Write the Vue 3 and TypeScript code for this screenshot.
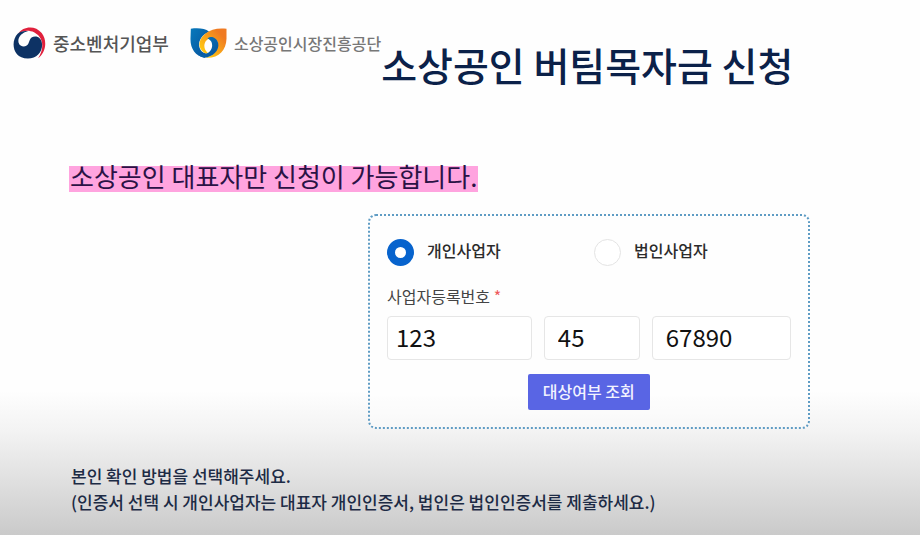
<script setup lang="ts">
import { ref } from 'vue'

interface NumberPart {
  id: string
  label: string
  value: string
  maxlength: number
}

const businessType = ref<string>('personal')
const types = [
  { value: 'personal', label: '개인사업자' },
  { value: 'corporate', label: '법인사업자' },
]
const parts = ref<NumberPart[]>([
  { id: 'biz-first', label: '사업자등록번호 첫 번째 자리', value: '123', maxlength: 3 },
  { id: 'biz-middle', label: '사업자등록번호 가운데 자리', value: '45', maxlength: 2 },
  { id: 'biz-last', label: '사업자등록번호 마지막 자리', value: '67890', maxlength: 5 },
])
</script>

<template>
  <main class="page">
    <header class="header">
      <div class="brands">
        <div class="brand ministry">
          <svg class="emblem" viewBox="0 0 100 96" aria-hidden="true">
            <path fill="#e0203c" d="M16 19C30-3 68-7 87 18C106 43 98 78 76 94C90 73 94 48 80 29C66 10 38 5 16 19Z" />
            <path fill="#0d3264" d="M14 20C-8 43-2 95 45 95C73 95 90 73 88 51C87 36 78 28 67 28C51 28 51 41 46 51C40 62 21 61 17 47C13 33 25 17 46 12C33 10 22 13 14 20Z" />
          </svg>
          <span>중소벤처기업부</span>
        </div>
        <div class="brand agency">
          <svg class="shield" viewBox="0 0 110 90" aria-hidden="true">
            <defs>
              <linearGradient id="gold" x1="0" y1="1" x2="1" y2="0">
                <stop offset="0.2" stop-color="#ffc512" />
                <stop offset="0.8" stop-color="#ef7a22" />
              </linearGradient>
              <linearGradient id="blue" x1="0" y1="0" x2="1" y2="1">
                <stop offset="0" stop-color="#0879bc" />
                <stop offset="1" stop-color="#07509a" />
              </linearGradient>
            </defs>
            <path fill="url(#blue)" d="M2 2C25-1 44 1 57 11C34 21 25 38 27 54C29 69 41 78 55 76C51 82 48 86 43 89C15 84 0 61 1 31Z" />
            <path fill="url(#gold)" d="M109 2C83-1 61 4 45 17C28 31 24 49 31 62C37 73 46 77 55 77C45 69 41 60 43 49C45 36 57 29 67 29C81 32 86 44 82 59C77 75 64 84 46 89C84 92 108 68 109 32Z" />
            <path fill="url(#blue)" d="M52 32C64 21 80 31 84 45C89 67 68 87 43 89C35 88 29 84 24 80C47 83 64 72 66 54C67 43 61 34 52 32Z" />
          </svg>
          <span>소상공인시장진흥공단</span>
        </div>
      </div>
      <h1 class="title">소상공인 버팀목자금 신청</h1>
    </header>

    <p class="notice"><mark>소상공인 대표자만 신청이 가능합니다.</mark></p>

    <form class="card" @submit.prevent>
      <div class="types" role="radiogroup" aria-label="사업자 유형">
        <label v-for="type in types" :key="type.value" class="type">
          <input v-model="businessType" type="radio" name="business-type" :value="type.value" />
          <span>{{ type.label }}</span>
        </label>
      </div>
      <label class="number-label" for="biz-first">사업자등록번호 <span class="required">*</span></label>
      <div class="numbers">
        <input
          v-for="part in parts"
          :id="part.id"
          :key="part.id"
          v-model="part.value"
          :class="part.id"
          type="text"
          inputmode="numeric"
          :maxlength="part.maxlength"
          :aria-label="part.label"
        />
      </div>
      <button class="submit" type="submit">대상여부 조회</button>
    </form>

    <p class="guide">
      본인 확인 방법을 선택해주세요.<br />
      (인증서 선택 시 개인사업자는 대표자 개인인증서, 법인은 법인인증서를 제출하세요.)
    </p>
  </main>
</template>

<style>
body {
  margin: 0;
}
</style>

<style scoped>
.page {
  box-sizing: border-box;
  min-height: 100vh;
  padding-top: 23px;
  background: linear-gradient(to top, #cacaca 0, #e2e2e2 60px, #f3f3f3 104px, #fefefe 144px);
  color: #1d2b45;
  font-family: "Noto Sans CJK KR", "Noto Sans", sans-serif;
}

.header {
  display: flex;
  align-items: flex-start;
  padding-left: 13px;
  white-space: nowrap;
}

.brands {
  display: flex;
  align-items: center;
  gap: 21px;
  height: 40px;
}

.brand {
  display: flex;
  align-items: center;
  gap: 7px;
  color: #555;
}

.ministry {
  font-size: 18px;
  font-weight: 500;
}

.agency {
  font-size: 16px;
  font-weight: 500;
  color: #777;
}

.emblem {
  width: 33px;
  height: 32px;
}

.shield {
  width: 37px;
  height: 30px;
}

.title {
  margin: 13px 0 0;
  color: #0b2149;
  font-size: 39px;
  font-weight: 500;
  line-height: 56px;
}

.notice {
  margin: 66px 0 0 69px;
  font-size: 26px;
  line-height: 36px;
}

.notice mark {
  padding: 0 1px;
  background: linear-gradient(#ffa4df, #ffa4df) center 80% / 100% 26px no-repeat;
  color: #2a1245;
}

.card {
  box-sizing: border-box;
  width: 48%;
  margin: 20px 12% 0 auto;
  padding: 22px 17px 17px;
  border: 2px dotted #5f9cc4;
  border-radius: 8px;
  background: rgba(255, 255, 255, 0.4);
}

.types {
  display: grid;
  grid-template-columns: 207px 1fr;
}

.type {
  display: flex;
  align-items: center;
  gap: 13px;
  color: #2b2b2b;
  font-size: 16px;
  font-weight: 500;
  line-height: 24px;
}

.type span {
  padding-bottom: 4px;
}

.type input {
  appearance: none;
  box-sizing: border-box;
  width: 27px;
  height: 27px;
  margin: 0;
  border: 1px solid #e4e4e4;
  border-radius: 50%;
  background: #fff;
}

.type input:checked {
  border: 8px solid #0763cd;
}

.number-label {
  display: block;
  margin-top: 18px;
  color: #444;
  font-size: 16px;
  line-height: 24px;
}

.required {
  color: #ee5a5a;
}

.numbers {
  display: grid;
  grid-template-columns: 145fr 96fr 139fr;
  gap: 12px;
  margin-top: 8px;
}

.numbers input {
  box-sizing: border-box;
  min-width: 0;
  height: 44px;
  padding: 0 8px 3px;
  border: 1px solid #e6e6e6;
  border-radius: 4px;
  background: #fff;
  color: #111;
  font: 400 24px "Noto Sans CJK KR", "Noto Sans", sans-serif;
}

.numbers .biz-middle,
.numbers .biz-last {
  padding-left: 13px;
}

.submit {
  display: block;
  height: 36px;
  margin: 14px auto 0;
  padding: 0 15px 2px;
  border: 0;
  border-radius: 2px;
  background: #5965e4;
  color: #f2f3ff;
  font: 500 16px "Noto Sans CJK KR", "Noto Sans", sans-serif;
}

.guide {
  margin: 34px 0 0 71px;
  font-size: 17px;
  font-weight: 500;
  line-height: 26px;
}
</style>
